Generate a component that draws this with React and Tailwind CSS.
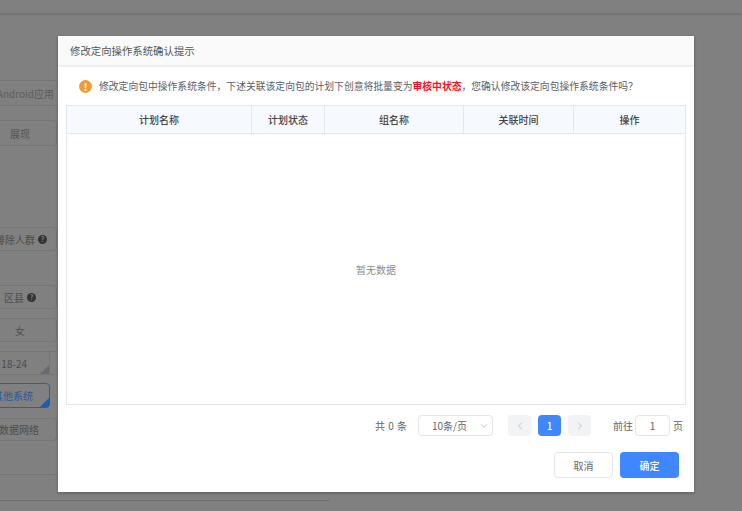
import { ChevronLeft, ChevronRight, ChevronDown } from "lucide-react";

const columns = [
  { title: "计划名称", width: "w-[185px]" },
  { title: "计划状态", width: "w-[73px]" },
  { title: "组名称", width: "w-[139px]" },
  { title: "关联时间", width: "w-[110px]" },
  { title: "操作", width: "flex-1" },
];

function HelpDot() {
  return (
    <span className="flex h-[9px] w-[9px] shrink-0 items-center justify-center rounded-full bg-[#333333] text-[7px] font-bold text-[#808080]">
      ?
    </span>
  );
}

function BackdropPage() {
  return (
    <div className="h-[511px] overflow-hidden bg-[#808080] text-[10px] text-[#4d4d4d]">
      <div className="h-[15px] border-b-2 border-[#767676]" />
      <div className="ml-[-40px] mt-[65px] w-[97px]">
        <div className="flex h-[26px] items-center justify-end whitespace-nowrap border-y border-[#767676] pr-[3px] text-[#5c5c5c]">
          Android应用
        </div>
        <div className="mt-[14px] flex h-[26px] items-center justify-center rounded-sm border border-[#767676] pl-[23px] text-[#555555]">
          展现
        </div>
        <div className="mt-[81px] flex h-[24px] items-center justify-end gap-[3px] whitespace-nowrap rounded-sm border border-[#767676] pr-[9px]">
          排除人群
          <HelpDot />
        </div>
        <div className="mt-[34px] flex h-[24px] items-center justify-center gap-[3px] rounded-sm border border-[#767676] pl-[23px]">
          区县
          <HelpDot />
        </div>
        <div className="mt-[9px] flex h-[24px] items-center justify-center rounded-sm border border-[#767676] pl-[23px]">
          女
        </div>
        <div className="mt-[9px] h-[24px] border-y border-[#767676]">
          <div className="relative flex h-full w-[90px] items-center justify-end border-r border-[#767676] pr-[22px]">
            18-24
            <span className="absolute bottom-0 right-0 h-[9px] w-[9px] bg-[#666a73] [clip-path:polygon(100%_0,100%_100%,0_100%)]" />
          </div>
        </div>
        <div className="relative mt-[8px] flex h-[25px] w-[90px] items-center justify-end whitespace-nowrap rounded-sm border border-[#2f5ba8] pr-[16px] text-[#2f57a0]">
          其他系统
          <span className="absolute bottom-0 right-0 h-[9px] w-[9px] bg-[#2259ad] [clip-path:polygon(100%_0,100%_100%,0_100%)]" />
        </div>
        <div className="mt-[10px] flex h-[23px] items-center justify-end whitespace-nowrap rounded-sm border border-[#767676] pr-[17px]">
          数据网络
        </div>
      </div>
      <div className="mt-[33px] w-[330px] border-t border-[#767676]" />
      <div className="mt-[25px] w-[330px] border-t border-[#6f6f6f]" />
    </div>
  );
}

function ConfirmDialog() {
  return (
    <div className="absolute left-[58px] top-[36px] flex h-[456px] w-[636px] flex-col bg-white text-[10px] text-[#5a5e66] shadow-[0_1px_3px_rgba(0,0,0,0.3)]">
      <div className="flex h-[31px] items-center border-b-2 border-[#eeeeee] bg-[#fafafa] pl-[12px] text-[10.4px] text-[#555555]">
        修改定向操作系统确认提示
      </div>

      <div className="flex h-[38px] items-center pl-[21px] pt-[1px]">
        <span className="mr-[7px] flex h-[13px] w-[13px] shrink-0 items-center justify-center rounded-full bg-[#eb9e35] text-[10px] font-bold text-white">
          !
        </span>
        <span className="whitespace-nowrap text-[9.8px]">
          修改定向包中操作系统条件，下述关联该定向包的计划下创意将批量变为
          <span className="font-bold text-[#ff0f1f]">审核中状态</span>
          ，您确认修改该定向包操作系统条件吗？
        </span>
      </div>

      <div className="mx-[8px] flex h-[300px] flex-col border border-[#e3e7f0]">
        <div className="flex h-[28px] border-b border-[#e3e7f0] bg-[#f6f9fe] font-medium text-[#444444]">
          {columns.map((col) => (
            <div
              key={col.title}
              className={`${col.width} flex items-center justify-center border-r border-[#e3e7f0] last:border-r-0`}
            >
              {col.title}
            </div>
          ))}
        </div>
        <div className="flex flex-1 items-center justify-center text-[#8c8c8c]">暂无数据</div>
      </div>

      <div className="mt-[10px] flex h-[21px] items-center justify-end pr-[11px] text-[#666666]">
        <span className="mr-[11px] whitespace-pre [word-spacing:1px]">共 0 条</span>
        <div className="relative mr-[15px] flex h-[21px] w-[75px] items-center rounded-sm border border-[#e3e5ea] pl-[13px]">
          10条/页
          <ChevronDown className="absolute right-[3px] top-[5px] h-[10px] w-[10px] text-[#bbbbbb]" />
        </div>
        <div className="flex h-[21px] w-[23px] items-center justify-center rounded-sm bg-[#f2f3f5] text-[#c0c4cc]">
          <ChevronLeft className="h-[12px] w-[12px]" />
        </div>
        <div className="mx-[7px] flex h-[21px] w-[23px] items-center justify-center rounded-sm bg-[#3f87ff] font-medium text-white">
          1
        </div>
        <div className="flex h-[21px] w-[23px] items-center justify-center rounded-sm bg-[#f2f3f5] text-[#c0c4cc]">
          <ChevronRight className="h-[12px] w-[12px]" />
        </div>
        <span className="ml-[22px]">前往</span>
        <div className="mx-[2px] flex h-[21px] w-[35px] items-center justify-center rounded-sm border border-[#e3e5ea]">1</div>
        <span className="ml-[1px]">页</span>
      </div>

      <div className="mt-[16px] flex justify-end gap-[7px] pr-[15px]">
        <div className="flex h-[26px] w-[59px] items-center justify-center rounded-sm border border-[#e3e5ea] text-[#666666]">取消</div>
        <div className="flex h-[26px] w-[59px] items-center justify-center rounded-sm bg-[#3f87ff] font-medium text-white">确定</div>
      </div>
    </div>
  );
}

export default function App() {
  return (
    <div className="relative h-[511px] w-[742px] overflow-hidden font-['Noto_Sans_CJK_SC','Liberation_Sans',sans-serif]">
      <BackdropPage />
      <ConfirmDialog />
    </div>
  );
}
